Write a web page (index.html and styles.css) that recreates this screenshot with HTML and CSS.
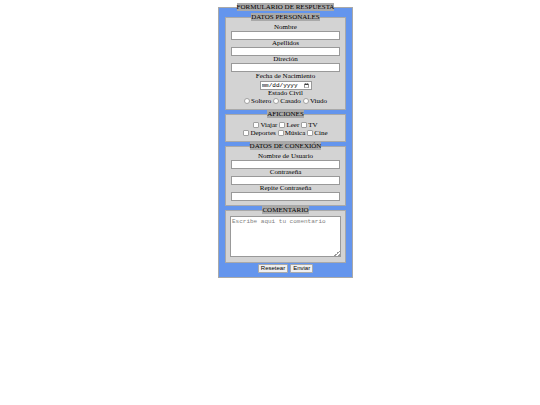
FILE: index.html
```html
<!DOCTYPE html>
<html lang="es">
<head>
<meta charset="utf-8">
<title>Formulario de respuesta</title>
<link rel="stylesheet" href="styles.css">
</head>
<body>
<form class="page">
  <fieldset class="form">
    <legend>FORMULARIO DE RESPUESTA</legend>
    <fieldset class="group">
      <legend>DATOS PERSONALES</legend>
      <label class="caption" for="nombre">Nombre</label>
      <input class="field" type="text" id="nombre">
      <label class="caption" for="apellidos">Apellidos</label>
      <input class="field" type="text" id="apellidos">
      <label class="caption" for="direccion">Direción</label>
      <input class="field" type="text" id="direccion">
      <label class="caption date-caption" for="fecha">Fecha de Nacimiento</label>
      <input class="date" type="date" id="fecha">
      <div class="caption">Estado Civil</div>
      <div class="options">
        <label><input type="radio" name="estado">Soltero</label>
        <label><input type="radio" name="estado">Casado</label>
        <label><input type="radio" name="estado">Viudo</label>
      </div>
    </fieldset>
    <fieldset class="group">
      <legend>AFICIONES</legend>
      <div class="options">
        <label><input type="checkbox">Viajar</label>
        <label><input type="checkbox">Leer</label>
        <label><input type="checkbox">TV</label>
      </div>
      <div class="options">
        <label><input type="checkbox">Deportes</label>
        <label><input type="checkbox">Música</label>
        <label><input type="checkbox">Cine</label>
      </div>
    </fieldset>
    <fieldset class="group">
      <legend>DATOS DE CONEXIÓN</legend>
      <label class="caption" for="usuario">Nombre de Usuario</label>
      <input class="field" type="text" id="usuario">
      <label class="caption" for="clave">Contraseña</label>
      <input class="field" type="password" id="clave">
      <label class="caption" for="clave2">Repite Contraseña</label>
      <input class="field" type="password" id="clave2">
    </fieldset>
    <fieldset class="group comment">
      <legend>COMENTARIO</legend>
      <textarea aria-label="Comentario" placeholder="Escribe aqui tu comentario"></textarea>
    </fieldset>
    <div class="actions">
      <button type="reset">Resetear</button>
      <button type="submit">Enviar</button>
    </div>
  </fieldset>
</form>
</body>
</html>
```
FILE: styles.css
```css
* {
  box-sizing: border-box;
}

body {
  margin: 0;
  background: #fff;
  color: #000;
  font: 7px/8px "Liberation Serif", serif;
  text-align: center;
}

.page {
  display: grid;
  grid-template-columns: 218fr 135fr 187fr;
  padding-top: 3px;
}

fieldset {
  min-width: 0;
  margin: 0;
  border: 1px solid #a9a9a9;
}

legend {
  margin: 0 auto;
  padding: 0;
  background: #a9a9a9;
}

.form {
  grid-column: 2;
  padding: 2px 6px 4px;
  background: cornflowerblue;
}

.group {
  padding: 3px 5px 4px;
  background: lightgray;
}

.caption {
  display: block;
  line-height: 7px;
}

.date-caption {
  line-height: 8px;
}

.field,
.date,
textarea {
  border: 1px solid #999;
  border-radius: 0;
  background: #fff;
  outline: 0;
}

.field {
  display: block;
  width: 100%;
  height: 9px;
  padding: 0 1px;
  font: 6px/7px "Liberation Sans", sans-serif;
}

.date {
  display: block;
  width: 52px;
  height: 9px;
  margin: 1px auto 0;
  padding: 0 1px;
  font: 6px/7px "Liberation Mono", monospace;
}

.date::-webkit-datetime-edit,
.date::-webkit-datetime-edit-fields-wrapper,
.date::-webkit-datetime-edit-month-field,
.date::-webkit-datetime-edit-day-field,
.date::-webkit-datetime-edit-year-field {
  padding: 0;
}

.date::-webkit-calendar-picker-indicator {
  width: 6px;
  height: 5px;
  margin: 0;
  padding: 0;
  background-position: center;
  background-size: 5px 5px;
  background-repeat: no-repeat;
}

.options {
  display: flex;
  justify-content: center;
  gap: 2px;
}

.options label {
  display: flex;
  align-items: center;
  gap: 1px;
}

.options input {
  appearance: none;
  width: 6px;
  height: 6px;
  margin: 0;
  border: 1px solid #a0a0a0;
  border-radius: 1px;
  background: #fff;
}

.options input[type="radio"] {
  border-radius: 50%;
}

.options input:checked {
  background: #0075ff;
}

.comment {
  padding: 2px 4px 5px;
}

textarea {
  display: block;
  width: 100%;
  height: 41px;
  padding: 1px;
  font: 6px/7px "Liberation Mono", monospace;
  text-align: left;
}

textarea::placeholder {
  color: #808080;
}

textarea::-webkit-resizer {
  background: linear-gradient(135deg, transparent 80%, #999 80%, #999 85%, transparent 85%, transparent 92%, #999 92%);
}

.actions {
  display: flex;
  justify-content: center;
  gap: 2px;
  padding-top: 1px;
}

button {
  height: 9px;
  padding: 0 2px;
  border: 1px solid #aaa;
  border-radius: 1px;
  background: #efefef;
  color: #000;
  font: 6px/7px "Liberation Sans", sans-serif;
}
```
